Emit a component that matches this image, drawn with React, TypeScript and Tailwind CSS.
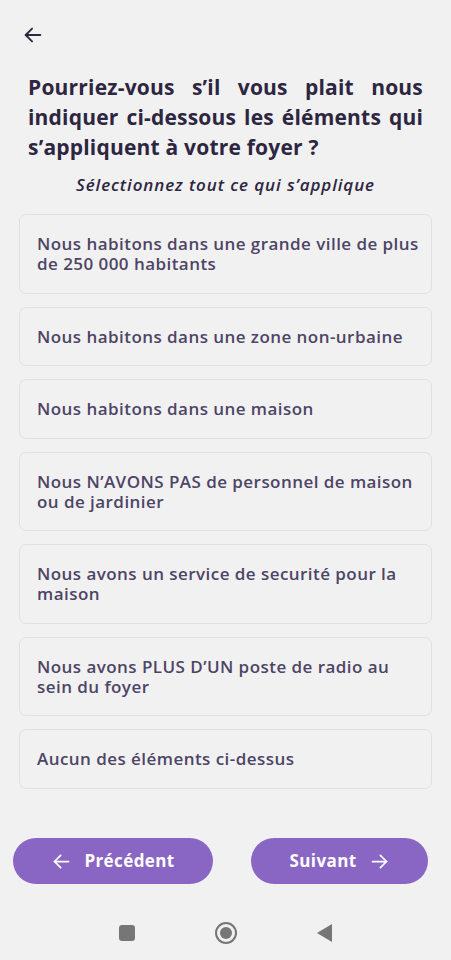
import React from 'react';

const options = [
  'Nous habitons dans une grande ville de plus de 250 000 habitants',
  'Nous habitons dans une zone non-urbaine',
  'Nous habitons dans une maison',
  'Nous N\u2019AVONS PAS de personnel de maison ou de jardinier',
  'Nous avons un service de securité pour la maison',
  'Nous avons PLUS D\u2019UN poste de radio au sein du foyer',
  'Aucun des éléments ci-dessus',
];

const ArrowLeft: React.FC<{ className?: string }> = ({ className }) => (
  <svg viewBox="0 0 24 24" fill="none" stroke="currentColor" strokeWidth={2} strokeLinecap="round" strokeLinejoin="round" className={className}>
    <path d="M20 12H4" />
    <path d="M11 5l-7 7 7 7" />
  </svg>
);

const ArrowRight: React.FC<{ className?: string }> = ({ className }) => (
  <svg viewBox="0 0 24 24" fill="none" stroke="currentColor" strokeWidth={2} strokeLinecap="round" strokeLinejoin="round" className={className}>
    <path d="M4 12h16" />
    <path d="M13 5l7 7-7 7" />
  </svg>
);

const App: React.FC = () => {
  return (
    <div className="w-[451px] h-[960px] bg-[#f2f1f2] flex flex-col font-['Open_Sans',sans-serif]">
      <div className="pt-[24px] pl-[22px] h-[60px]">
        <ArrowLeft className="w-[22px] h-[22px] text-[#2d2640]" />
      </div>

      <h1 className="mt-[12px] mx-[28px] text-[21px] leading-[30px] font-bold text-[#2d2640] text-justify tracking-[0.2px]">
        Pourriez-vous s’il vous plait nous indiquer ci-dessous les éléments qui s’appliquent à votre foyer ?
      </h1>

      <p className="mt-[12px] text-center text-[17px] leading-[22px] italic font-semibold text-[#2d2640] tracking-[0.9px]">
        Sélectionnez tout ce qui s’applique
      </p>

      <div className="mt-[18px] mx-[19px] flex flex-col gap-[13px]">
        {options.map((opt) => (
          <div
            key={opt}
            className="border border-[#e2e0e3] rounded-[7px] pl-[17px] pr-[6px] pt-[19px] pb-[18.5px] text-[17px] leading-[20px] font-semibold text-[#4d4565] tracking-[0.45px]"
          >
            {opt}
          </div>
        ))}
      </div>

      <div className="flex-1" />

      <div className="flex justify-between pl-[13px] pr-[23px]">
        <button className="w-[200px] h-[46px] rounded-full bg-[#8a66c4] text-white flex items-center justify-center gap-[12px] text-[17px] font-bold tracking-[0.4px]">
          <ArrowLeft className="w-[21px] h-[21px]" />
          Précédent
        </button>
        <button className="w-[177px] h-[46px] rounded-full bg-[#8a66c4] text-white flex items-center justify-center gap-[12px] text-[17px] font-bold tracking-[0.4px]">
          Suivant
          <ArrowRight className="w-[21px] h-[21px]" />
        </button>
      </div>

      <div className="h-[76px] pt-[38px]">
        <div className="h-[22px] flex items-center justify-center gap-[80px]">
          <div className="w-[16px] h-[16px] rounded-[3px] bg-[#767676]" />
          <div className="w-[22px] h-[22px] rounded-full border-[2px] border-[#767676] flex items-center justify-center">
            <div className="w-[12px] h-[12px] rounded-full bg-[#767676]" />
          </div>
          <svg viewBox="0 0 16 18" className="w-[16px] h-[18px]">
            <path d="M15 0 L0 9 L15 18 Z" fill="#767676" />
          </svg>
        </div>
      </div>
    </div>
  );
};

export default App;
